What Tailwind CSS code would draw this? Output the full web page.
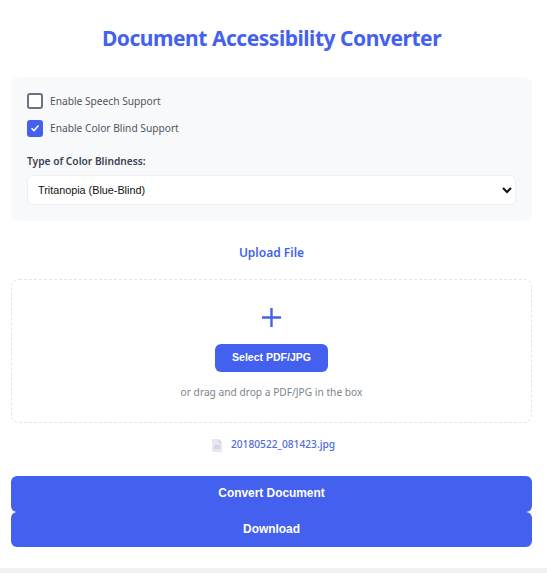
<!DOCTYPE html>
<html lang="en">
<head>
    <meta charset="UTF-8">
    <title>Document Accessibility Converter</title>
    <script src="https://cdn.jsdelivr.net/npm/@tailwindcss/browser@4"></script>
</head>
<body class="bg-[#f0f1f2] font-['Noto_Sans',sans-serif] h-[573px] overflow-hidden">
    <div class="bg-white h-[568px] pl-[11px] pr-[15px] pt-[22px]">
        <h1 class="text-center text-[21px] leading-[32px] tracking-[-0.47px] font-bold text-[#4361ee]">Document Accessibility Converter</h1>

        <!-- options -->
        <div class="mt-[23px] h-[144px] bg-[#f8f9fa] rounded-lg px-4 pt-[15px]">
            <label class="flex items-center h-[18px] text-[#4b5563] text-[10.2px]">
                <span class="w-4 h-4 border-2 border-[#6b7280] rounded-[3px] bg-white"></span>
                <span class="ml-[7px] mt-[2px]">Enable Speech Support</span>
            </label>
            <label class="flex items-center h-[18px] mt-[9px] text-[#4b5563] text-[10.2px]">
                <span class="w-4 h-[17px] rounded-[3px] bg-[#4361ee] flex items-center justify-center">
                    <svg class="w-[10px] h-[10px]" viewBox="0 0 10 10" fill="none" stroke="white" stroke-width="1.5"><path d="M1.5 5.2 4 7.6 8.5 2.6"/></svg>
                </span>
                <span class="ml-[7px] mt-[2px]">Enable Color Blind Support</span>
            </label>
            <div class="mt-[16px] text-[10.2px] leading-[16px] font-semibold text-[#374151]">Type of Color Blindness:</div>
            <select class="mt-[6px] w-full h-[30px] pl-[6px] pr-0 bg-white border border-[#eef0f2] rounded-md text-[10.8px] text-[#111] font-['Liberation_Sans',sans-serif]">
                <option>Tritanopia (Blue-Blind)</option>
            </select>
        </div>

        <h2 class="mt-[22px] text-center text-[12px] leading-[20px] font-semibold text-[#4361ee]">Upload File</h2>

        <!-- drop zone -->
        <div class="mt-[16px] h-[144px] border border-dashed border-[#e3e6e9] rounded-lg flex flex-col items-center pt-[28px]">
            <svg class="w-[19px] h-[19px]" viewBox="0 0 19 19" fill="none" stroke="#4361ee" stroke-width="2.4"><path d="M9.5 0v19M0 9.5h19"/></svg>
            <button class="mt-[17px] w-[113px] h-[28px] bg-[#4361ee] rounded-md text-white text-[10.5px] font-bold font-['Liberation_Sans',sans-serif]">Select PDF/JPG</button>
            <p class="mt-[12px] text-[10.2px] leading-[16px] text-[#7b848c]">or drag and drop a PDF/JPG in the box</p>
        </div>

        <!-- selected file -->
        <div class="mt-[13px] h-[18px] pl-[4px] flex items-center justify-center text-[10.2px] font-medium text-[#4f6bdc]">
            <svg class="w-[10px] h-[13px]" viewBox="0 0 10 13"><path d="M0 0h6.500l3.500 3.500v9.500H0z" fill="#eae6f2"/><path d="M6.500 0l3.500 3.500H6.500z" fill="#d3cee0"/><path d="M2 6h6v4H2z" fill="#d8d4e4"/></svg>
            <span class="ml-[9px]">20180522_081423.jpg</span>
        </div>

        <button class="mt-[22px] block w-full h-[36px] bg-[#4361ee] rounded-md text-white text-[11.9px] font-bold font-['Liberation_Sans',sans-serif]">Convert Document</button>
        <button class="block w-full h-[35px] bg-[#4361ee] rounded-md text-white text-[11.9px] font-bold font-['Liberation_Sans',sans-serif]">Download</button>
    </div>
</body>
</html>
